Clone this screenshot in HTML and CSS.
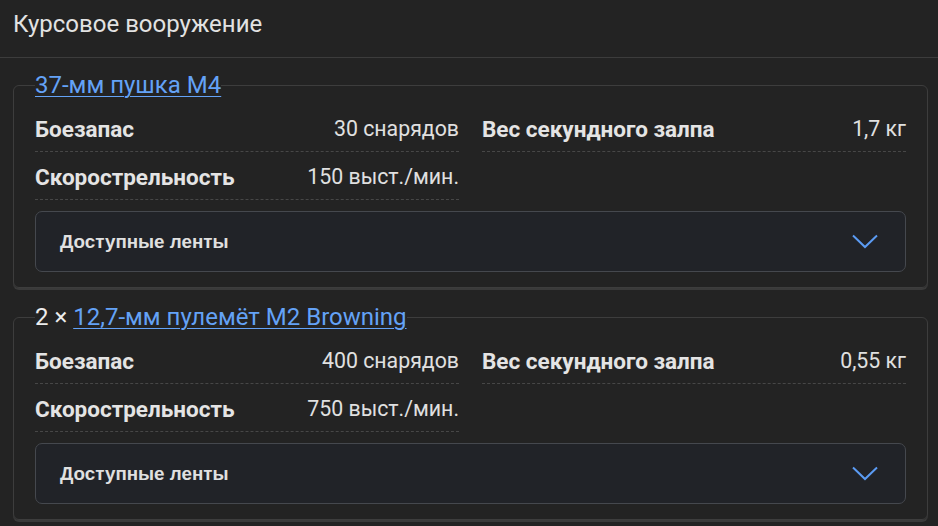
FILE: index.html
```html
<!DOCTYPE html>
<html lang="ru">
<head>
<meta charset="utf-8">
<link rel="stylesheet" href="styles.css">
</head>
<body>
<div class="header">Курсовое вооружение</div>
<div class="content">
  <fieldset class="card">
    <legend class="card-title"><a href="#" class="link">37-мм пушка M4</a></legend>
    <div class="stats">
      <div class="stat"><span class="label">Боезапас</span><span class="value">30 снарядов</span></div>
      <div class="stat"><span class="label">Вес секундного залпа</span><span class="value">1,7 кг</span></div>
      <div class="stat"><span class="label">Скорострельность</span><span class="value">150 выст./мин.</span></div>
    </div>
    <div class="dropdown">
      <span class="dropdown-label">Доступные ленты</span>
      <svg class="chevron" width="26" height="15" viewBox="0 0 26 15"><polyline points="1,1.5 13,13 25,1.5" fill="none" stroke="#5b9bf3" stroke-width="2"/></svg>
    </div>
  </fieldset>
  <fieldset class="card">
    <legend class="card-title">2 × <a href="#" class="link">12,7-мм пулемёт M2 Browning</a></legend>
    <div class="stats">
      <div class="stat"><span class="label">Боезапас</span><span class="value">400 снарядов</span></div>
      <div class="stat"><span class="label">Вес секундного залпа</span><span class="value">0,55 кг</span></div>
      <div class="stat"><span class="label">Скорострельность</span><span class="value">750 выст./мин.</span></div>
    </div>
    <div class="dropdown">
      <span class="dropdown-label">Доступные ленты</span>
      <svg class="chevron" width="26" height="15" viewBox="0 0 26 15"><polyline points="1,1.5 13,13 25,1.5" fill="none" stroke="#5b9bf3" stroke-width="2"/></svg>
    </div>
  </fieldset>
</div>
</body>
</html>
```

FILE: styles.css
```css
* { box-sizing: border-box; }
html, body {
  margin: 0;
  background: #232323;
  color: #e2e2e2;
  font-family: Roboto, "Noto Sans", sans-serif;
  width: 938px;
  height: 526px;
  overflow: hidden;
}
.header {
  height: 58px;
  padding: 10px 13px 0;
  font-size: 24px;
  line-height: 28px;
  border-bottom: 1px solid #3c3c3c;
}
.content {
  padding: 13px 10px 0 13px;
  display: flex;
  flex-direction: column;
  gap: 15px;
}
.card {
  margin: 0;
  min-width: 0;
  border: 1px solid #3d3d3d;
  border-radius: 6px;
  box-shadow: 0 2px 0 #3a3a3a;
  padding: 0 21px 15px;
}
.card-title {
  padding: 0;
  font-size: 24px;
  line-height: 28px;
  color: #ececec;
}
.link {
  color: #64a2f6;
  text-decoration: underline;
  text-underline-offset: 3px;
  text-decoration-thickness: 1px;
}
.stats {
  display: grid;
  grid-template-columns: 1fr 1fr;
  column-gap: 23px;
  margin-top: 5px;
}
.stat {
  display: flex;
  justify-content: space-between;
  align-items: center;
  height: 48px;
  padding: 11px 0 8px;
  line-height: 28px;
  border-bottom: 1px dashed #474747;
}
.label {
  font-weight: 700;
  font-size: 22.5px;
  color: #e4e4e4;
}
.value {
  font-size: 21.3px;
  color: #e0e0e0;
}
.dropdown {
  margin-top: 11px;
  height: 61px;
  display: flex;
  align-items: center;
  justify-content: space-between;
  padding: 0 27px 0 24px;
  background: #212328;
  border: 1px solid #45484e;
  border-radius: 7px;
}
.dropdown-label {
  font-family: "Liberation Sans", Arial, sans-serif;
  font-weight: 700;
  font-size: 18.8px;
  color: #e0e0e0;
}
.chevron { display: block; }
```
